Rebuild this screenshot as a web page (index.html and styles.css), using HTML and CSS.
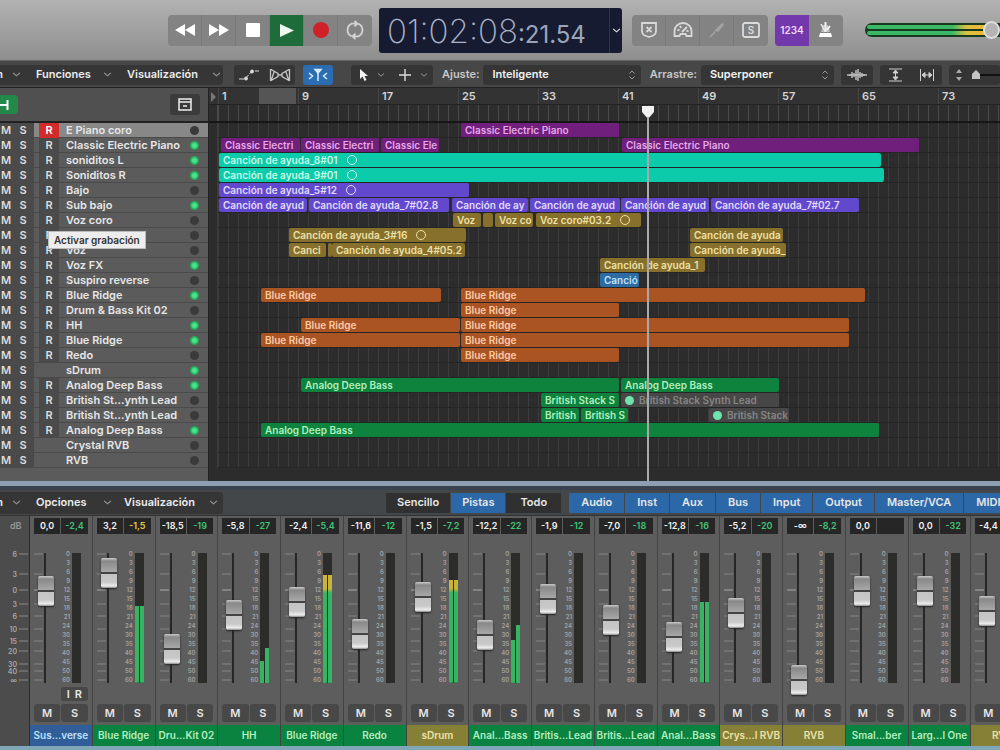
FILE: index.html
```html
<!DOCTYPE html>
<html lang="es">
<head>
<meta charset="utf-8">
<title>Proyecto - Pistas</title>
<link rel="stylesheet" href="styles.css">
</head>
<body>
<svg class="defs" width="0" height="0" aria-hidden="true">
  <symbol id="chev" viewBox="0 0 8 6"><path d="M1 1.5 4 4.2 7 1.5" fill="none" stroke="currentColor"/></symbol>
  <symbol id="updown" viewBox="0 0 8 12"><path d="M1.5 4.5 4 2 6.5 4.500M1.500 7.500 4 10 6.500 7.500" fill="none" stroke="currentColor"/></symbol>
</svg>

<header class="transport">
  <div class="group">
    <button class="tbtn" aria-label="Rebobinar"><svg width="22" height="14"><path d="M11 1v12L1 7zM21 1v12L11 7z" fill="#fff"/></svg></button>
    <button class="tbtn" aria-label="Avance"><svg width="22" height="14"><path d="M1 1v12l10-6zM11 1v12l10-6z" fill="#fff"/></svg></button>
    <button class="tbtn" aria-label="Detener"><svg width="16" height="16"><rect x="1" y="1" width="14" height="14" rx="1" fill="#fff"/></svg></button>
    <button class="tbtn play" aria-label="Reproducir"><svg width="16" height="16"><path d="M1 2v13l14-6.500z" fill="#eef8ee"/></svg></button>
    <button class="tbtn" aria-label="Grabar"><svg width="18" height="18"><circle cx="9" cy="9" r="8" fill="#d0202a"/></svg></button>
    <button class="tbtn" aria-label="Ciclo"><svg width="20" height="20" fill="none" stroke="#d4d4d4" stroke-width="1.800"><path d="M6.500 16.300A7 7 0 0 1 6.500 3.700H12M13.500 3.700A7 7 0 0 1 13.500 16.300H8M9.500 1l3 2.700-3 2.700M10.500 13.600l-3 2.700 3 2.700"/></svg></button>
  </div>
  <div class="lcd">
    <div class="time"><span class="big">01:02:08</span><span class="small">:21.54</span></div>
    <button class="lcdmenu" aria-label="Modo de pantalla"><svg width="9" height="7"><use href="#chev"/></svg></button>
  </div>
  <div class="group modes">
    <button class="tbtn" aria-label="Reemplazar"><svg width="18" height="18" fill="none" stroke="#d8d8d8" stroke-width="1.800"><path d="M2 2h14v8c0 4-3 5-7 6-4-1-7-2-7-6zM6.500 6l5 5M11.500 6l-5 5"/></svg></button>
    <button class="tbtn" aria-label="Latencia"><svg width="20" height="16" fill="none" stroke="#d8d8d8" stroke-width="1.800"><path d="M1.500 14V9a8.500 8 0 0 1 17 0v5h-5l-1-2h-5l-1 2zM9 10l5-5M4.500 8h2M7 4l1 2M15.500 9h-2"/></svg></button>
    <button class="tbtn" aria-label="Afinador"><svg width="18" height="18"><path d="M2 16l5-6 3 1 6-7-1-2-2 1-6 6z" fill="#a2a2a2"/><path d="M2 16l5-5" stroke="#a2a2a2" stroke-width="1.500"/></svg></button>
    <button class="tbtn" aria-label="Solo"><svg width="18" height="16"><rect x="1" y="1" width="16" height="14" rx="2" fill="none" stroke="#dcdcdc" stroke-width="1.800"/><text x="9" y="12" class="solo" text-anchor="middle">S</text></svg></button>
  </div>
  <div class="group count">
    <button class="tbtn countin">1234</button>
    <button class="tbtn" aria-label="Metrónomo"><svg width="16" height="18"><path d="M5 4h5l2 7H3z" fill="#bcbcbc"/><path d="M2 12h11l1 4H1z" fill="#fff"/><path d="M7.500 11 3 3" stroke="#e8e8e8" stroke-width="1.500"/><path d="M6.500 1h2v10h-2z" fill="#f0f0f0"/><path d="M9 9l3-4" stroke="#fff" stroke-width="1.500"/></svg></button>
  </div>
  <div class="volume" aria-label="Volumen maestro"><i></i><i></i><b></b></div>
</header>

<main class="arrange">
  <div class="toolbar">
    <div class="menus">
      <button class="menu cut"><span>n</span><svg width="9" height="7"><use href="#chev"/></svg></button>
      <button class="menu m1">Funciones<svg width="9" height="7"><use href="#chev"/></svg></button>
      <button class="menu m2">Visualización<svg width="9" height="7"><use href="#chev"/></svg></button>
    </div>
    <div class="tools auto">
      <button aria-label="Automatización"><svg width="22" height="14" fill="#ddd" stroke="#ddd"><path d="M1 11h6L14 3h7" fill="none" stroke-dasharray="5 1.500"/><circle cx="8" cy="10.500" r="1.500"/><circle cx="14" cy="3.500" r="1.500"/></svg></button>
      <button aria-label="Flex"><svg width="22" height="14" fill="none" stroke="#c4c4c4" stroke-width="1.300"><path d="M1.500 1v12M20.500 1v12M2 1.500l7 4v3l-7 4M20 1.500l-7 4v3l7 4M5 4l-3 9M17 4l3 9M9 7h4"/></svg></button>
    </div>
    <button class="catch" aria-label="Seguir reproducción"><svg width="22" height="14" fill="none" stroke="#d8ecff" stroke-width="1.500"><path d="M2 5l3.500 3L2 11M20 5l-3.500 3 3.500 3M11 4v9"/><path d="M8 1.500h6L11 5z" fill="#d8ecff"/></svg></button>
    <div class="tools pointer">
      <button aria-label="Puntero"><svg width="10" height="14"><path d="M1 1v10l2.500-2.500L5.500 13l2-1-2-4H9z" fill="#f4f4f4"/></svg><svg width="8" height="6"><use href="#chev"/></svg></button>
      <button aria-label="Marquesina"><svg width="14" height="14"><path d="M7 1v12M1 7h12" stroke="#ddd" stroke-width="1.400"/></svg><svg width="8" height="6"><use href="#chev"/></svg></button>
    </div>
    <label for="snap">Ajuste:</label>
    <div class="pick snap"><select id="snap"><option>Inteligente</option></select><svg width="8" height="12"><use href="#updown"/></svg></div>
    <label for="drag">Arrastre:</label>
    <div class="pick drag"><select id="drag"><option>Superponer</option></select><svg width="8" height="12"><use href="#updown"/></svg></div>
    <div class="tools wave"><button aria-label="Zoom de onda"><svg width="20" height="14" stroke="#bbb" stroke-width="1.500"><path d="M0 7h20M3 6v2M5 4v6M7 5v4M9 2v10M11 1v12M13 4v6M15 5v4M17 6v2"/></svg></button></div>
    <div class="tools fit">
      <button aria-label="Ajustar vertical"><svg width="16" height="16" stroke="#d0d0d0" fill="#d0d0d0"><path d="M1 2h13M1 14h13M7.500 4v8"/><path d="M5 6l2.500-3L10 6zM5 10l2.500 3 2.500-3z"/></svg></button>
      <button aria-label="Ajustar horizontal"><svg width="16" height="16" stroke="#d0d0d0" fill="#d0d0d0"><path d="M1.500 2v12M14.500 2v12M4 8h8"/><path d="M6 5.500L3 8l3 2.500zM10 5.500L13 8l-3 2.500z"/></svg></button>
    </div>
    <div class="tools zoom"><svg width="60" height="16"><path d="M2 6l3-4 3 4zM2 10l3 4 3-4z" fill="#aaa"/><path d="M20 8h40" stroke="#111" stroke-width="2"/><path d="M18 12V7l4-4 4 4v5z" fill="#c4c4c4"/></svg></div>
  </div>

  <div class="workspace">
    <section class="tracks">
      <div class="trackhead">
        <button class="add" aria-label="Vista de pistas"><svg width="18" height="18"><path d="M0 9h7M7.500 4v10" stroke="#fff" stroke-width="2"/></svg></button>
        <button class="config" aria-label="Configurar"><svg width="14" height="13" fill="none" stroke="#eee" stroke-width="1.500"><path d="M1 1h12v11H1zM1 4h12M5 8h4"/></svg></button>
      </div>
      <div class="tracklist" id="tracklist"></div>
      <div class="tooltip" role="tooltip">Activar grabación</div>
    </section>
    <section class="timeline">
      <div class="ruler"><div class="numbers" id="numbers"></div><div class="ticks"></div><svg class="start" width="6" height="10"><path d="M0 0l5 5-5 5z" fill="#777"/></svg></div>
      <div class="lanes" id="lanes"></div>
      <div class="playhead"><svg width="14" height="15"><path d="M1 1h12v6l-6 7-6-7z" fill="#f0f0f0"/></svg></div>
    </section>
  </div>
</main>

<section class="mixer">
  <div class="mixbar">
    <div class="menus">
      <button class="menu cut"><span>n</span><svg width="9" height="7"><use href="#chev"/></svg></button>
      <button class="menu m1">Opciones<svg width="9" height="7"><use href="#chev"/></svg></button>
      <button class="menu m3">Visualización<svg width="9" height="7"><use href="#chev"/></svg></button>
    </div>
    <div class="seg views"><button>Sencillo</button><button class="on">Pistas</button><button>Todo</button></div>
    <div class="seg filters"><button>Audio</button><button>Inst</button><button>Aux</button><button>Bus</button><button>Input</button><button>Output</button><button>Master/VCA</button><button>MIDI</button></div>
  </div>
  <div class="console">
    <div class="scale"><span>dB</span><svg id="dbscale" width="30" height="150"></svg></div>
    <div class="strips" id="strips"></div>
  </div>
</section>
<script src="app.js"></script>
</body>
</html>
```
FILE: styles.css
```css
* { box-sizing: border-box; }
body {
  margin: 0; height: 100vh; overflow: hidden; display: flex; flex-direction: column;
  background: #2c2c2c; color: #e6e6e6;
  font: 600 11px/15px Inter, "Liberation Sans", sans-serif;
}
button, select { font: inherit; color: inherit; border: 0; padding: 0; margin: 0; background: none; }
button { display: flex; align-items: center; justify-content: center; white-space: nowrap; }
svg { flex: none; display: block; }
.defs { position: absolute; }

.transport {
  flex: none; height: 61px; display: flex; align-items: center; padding: 0 0 0 168px;
  background: linear-gradient(#b2b2b2, #a2a2a2 45%, #8e8e8e); border-bottom: 1px solid #666;
}
.group { display: flex; height: 31px; border-radius: 4px; overflow: hidden; background: #838383; }
.tbtn { width: 34px; border-right: 1px solid #797979; }
.tbtn:last-child { border-right: 0; }
.play { background: #1e6c39; }
.lcd { width: 243px; height: 45px; margin: 0 10px 0 7px; display: flex; background: #161b31; border-radius: 3px; }
.time { flex: 1; display: flex; align-items: baseline; padding-left: 8px; color: #a9b2c6; }
.big { font-size: 33px; line-height: 46px; font-weight: 200; }
.small { font-size: 24px; font-weight: 400; color: #9ba5ba; }
.lcdmenu { width: 13px; border-left: 1px solid #2c3248; }
.solo { font: 600 10px Inter, sans-serif; fill: #dcdcdc; }
.count { margin-left: 7px; }
.countin { background: #7338ab; color: #f0dcff; font-size: 10px; border: 0; }
.volume {
  position: relative; flex: 1; height: 14px; margin-left: 22px; padding: 2px; display: flex; flex-direction: column; gap: 2px;
  background: #17391f; border-radius: 7px 0 0 7px;
}
.volume i { flex: 1; border-radius: 3px 0 0 3px; background: linear-gradient(90deg, #3cb765 65%, #e0c040 76%, #f0b030); }
.volume b { position: absolute; right: 0; top: -2px; width: 17px; height: 18px; border-radius: 50%; background: #b4b4b4; border: 2px solid #dedede; }

.arrange { flex: 1; min-height: 0; display: flex; flex-direction: column; }
.toolbar { flex: none; height: 27px; display: flex; align-items: center; padding-top: 1px; background: #474747; border-bottom: 1px solid #222; overflow: hidden; }
.toolbar label { margin: 0 4px 0 9px; color: #c8c8c8; }
.menus { flex: none; width: 223px; height: 20px; display: flex; background: #363636; border-radius: 0 3px 3px 0; color: #ececec; }
.menu { justify-content: space-between; }
.menu svg, .tools svg, .pick svg { color: #999; }
.cut { width: 21px; }
.m1 { width: 76px; margin-left: 15px; }
.m2 { width: 94px; margin-left: 15px; }
.m3 { width: 94px; margin-left: 12px; }
.cut span { width: 3px; display: flex; justify-content: flex-end; }
.tools { flex: none; height: 20px; display: flex; background: #353535; border-radius: 3px; }
.tools button { flex: 1; gap: 8px; }
.auto { width: 61px; margin-left: 11px; }
.catch { flex: none; width: 30px; height: 20px; margin: 0 18px 0 8px; background: #2c6cb0; border-radius: 3px; }
.pointer { width: 82px; }
.pick { position: relative; height: 20px; background: #353535; border-radius: 3px; color: #f2f2f2; }
.pick select { width: 100%; height: 20px; padding-left: 9px; appearance: none; }
.pick svg { position: absolute; right: 5px; top: 4px; pointer-events: none; }
.snap { flex: 155; }
.drag { flex: 131; }
.wave { width: 32px; margin-left: 7px; }
.fit { width: 62px; margin: 0 7px; }
.zoom { width: 51px; align-items: center; padding-left: 5px; overflow: hidden; }

.workspace { flex: 1; min-height: 0; display: flex; }
.tracks { position: relative; flex: none; width: 209px; background: #5b5b5b; border-right: 1px solid #222; }
.trackhead { height: 35px; display: flex; align-items: center; justify-content: space-between; padding-right: 8px; background: #505050; border-bottom: 2px solid #222; }
.add { width: 18px; height: 19px; background: #22894a; border-radius: 0 4px 4px 0; }
.config { width: 30px; height: 21px; background: #3b3b3b; border-radius: 3px; }
.track { height: 15px; display: grid; grid-template-columns: 12px 22px 5px 20px 7px 1fr 27px; border-bottom: 1px solid #4a4a4a; line-height: 15px; }
.track button { background: #4a4a4a; height: 15px; color: #dcdcdc; overflow: hidden; }
.track .rec { grid-column: 4; }
.track .name { grid-column: 6; white-space: nowrap; }
.track .led { grid-column: 7; width: 9px; height: 9px; margin: 3px 0 0 9px; border-radius: 50%; background: #3a3a3a; }
.track .led.on { background: radial-gradient(#4ee08a 30%, #22a858 60%); }
.track.selected { background: linear-gradient(90deg, #5b5b5b 34px, #888 34px); }
.track.selected .rec { background: #d32a2c; color: #fff; }
.tooltip { position: absolute; left: 48px; top: 143px; padding: 0 5px; height: 18px; line-height: 17px; font-size: 10px; color: #333; background: #ededed; border: 1px solid #bbb; }

.timeline { position: relative; flex: 1; min-width: 0; overflow: hidden; background: #2c2c2c; }
.ruler { position: relative; height: 35px; border-bottom: 2px solid #161616; background: #2d2d2d; }
.start { position: absolute; left: 2px; top: 4px; }
.numbers { display: flex; height: 17px; padding-left: 9px; background: linear-gradient(90deg, #333 50px, #555 50px, #555 87px, #333 87px); border-bottom: 1px solid #222; }
.numbers span { flex: none; width: 80px; padding-left: 3px; border-left: 1px solid #454545; line-height: 17px; color: #d4d4d4; }
.ticks { height: 16px; background: repeating-linear-gradient(90deg, #4a4a4a 0, #4a4a4a 1px, transparent 1px, transparent 10px) 9px 0; }
.lanes { background: repeating-linear-gradient(90deg, #3c3c3c 0, #3c3c3c 1px, transparent 1px, transparent 10px) 9px 0; }
.lane { position: relative; height: 15px; margin-left: 9px; border-bottom: 1px solid #252525; }
.region {
  position: absolute; top: 0; height: 14px; padding-left: 4px; overflow: hidden; white-space: nowrap;
  border-radius: 2px; font-size: 10px; line-height: 15px;
}
.region.looped::after { content: ""; display: inline-block; width: 8px; height: 8px; margin-left: 9px; border: 1px solid currentColor; border-radius: 50%; vertical-align: -1px; }
.purple { background: #701f7d; color: #e3a8e8; }
.teal { background: #0bcbaa; color: #c8fbe8; }
.indigo { background: #6148cd; color: #e2dcff; }
.olive { background: #87702c; color: #eee0a8; }
.orange { background: #aa5423; color: #fccba8; }
.green { background: #0d833d; color: #b2efbe; }
.blue { background: #2d6ba2; color: #bfe2fa; }
.muted { background: #474747; color: #858585; }
.muted::before { content: ""; display: inline-block; width: 9px; height: 9px; margin-right: 5px; border-radius: 50%; background: #6fe3ab; vertical-align: -1px; }
.playhead { position: absolute; left: 432px; top: 17px; bottom: 0; width: 14px; }
.playhead::after { content: ""; position: absolute; left: 6px; top: 12px; bottom: 0; width: 2px; background: #a9a9a9; }

.mixer { flex: none; border-top: 5px solid #8f9fb3; border-bottom: 4px solid #7fa7b8; background: #444749; }
.mixbar { height: 29px; display: flex; align-items: center; overflow: hidden; border-top: 4px solid #39424d; }
.mixbar .menus { height: 22px; }
.seg { display: flex; height: 20px; gap: 1px; }
.seg button { padding: 0 12px; background: #303030; color: #e6e6e6; }
.views { margin-left: 163px; }
.views button.on, .filters button { background: #2c68a8; }
.views button { padding: 0 11px; }
.filters { margin-left: 8px; }
.views, .filters { font-size: 11px; }
.views button:last-child { padding: 0 14px; }
.filters button { padding: 0 12px; }
.console { display: flex; border-top: 1px solid #333; }
.scale { flex: none; width: 30px; padding-top: 2px; background: #4c4c4c; color: #999; font-size: 9px; border-right: 1px solid #2c2c2c; }
.scale span { display: block; height: 16px; padding-left: 10px; }
.scale svg { margin-top: 5px; }
.scale text { font: 600 7px Inter, sans-serif; fill: #a8a8a8; }
.strips { flex: 1; min-width: 0; display: flex; overflow: hidden; background: #5d5d5d; }
.strip { flex: 0 0 6.47%; border-right: 1px solid #434343; }
.pair { display: grid; grid-template-columns: 1fr 1fr; gap: 1px; padding: 0 4px; }
.readouts { padding-top: 2px; }
.readouts output { height: 16px; line-height: 16px; text-align: center; background: #262626; color: #f2f2f2; font-size: 9px; overflow: hidden; }
.readouts .peak { color: #3fc47a; }
.readouts .peak.hot { color: #e2cf3a; }
.faders { display: grid; grid-template-columns: 24px 10px 9px; column-gap: 2px; height: 154px; padding: 5px 0 0 4px; }
.fader { position: relative; height: 156px; background: linear-gradient(#272727, #272727) 10px 14px / 2px 130px no-repeat; }
.fader svg { position: absolute; left: 0; top: 0; }
.fader input { position: relative; display: block; width: 16px; height: 156px; margin: 0 0 0 4px; appearance: none; background: none; writing-mode: vertical-lr; direction: rtl; }
.fader input::-webkit-slider-thumb { appearance: none; width: 16px; height: 30px; border-radius: 2px; background: linear-gradient(#ccc 0, #888 3px, #a8a8a8 14px, #444 14px, #444 16px, #c4c4c4 16px, #c8c8c8 24px, #eee 28px, #888); box-shadow: 0 1px 2px #222; }
.digits { display: flex; flex-direction: column; justify-content: space-between; height: 135px; margin-top: 10px; font-size: 6px; line-height: 9px; text-align: right; color: #a2a2a2; }
.meter { height: 130px; margin-top: 14px; display: flex; align-items: flex-end; gap: 1px; background: #2c2c2a; }
.meter i { flex: 1; background: linear-gradient(0deg, #36b463 90px, #c6b43a 94px, #d8b43a 130px) bottom / 100% 130px no-repeat; }
.mode { height: 14px; width: 27px; margin: -1px 4px 0 auto; }
.mode button { width: 27px; height: 14px; gap: 5px; background: #484848; border-radius: 3px; }
.mute { padding-top: 3px; }
.mute button { height: 18px; background: #484848; border-radius: 3px; }
.label { height: 21px; margin-top: 3px; line-height: 21px; text-align: center; white-space: nowrap; font-size: 10px; overflow: hidden; }
.label.green { background: #0a8240; }
.label.olive { background: #858035; }
.label.blue { background: #315e98; }
```
FILE: app.js
```javascript
const CEP = 'Classic Electric Piano', CA = 'Canción de ayuda', BR = 'Blue Ridge', ADB = 'Analog Deep Bass';
// name, record button, active light, regions [start, length, colour, title, looped]
const tracks = [
  ['E Piano coro', 1, 0, [[243, 158, 'purple', CEP]]],
  [CEP, 1, 1, [[3, 79, 'purple', 'Classic Electri'], [83, 78, 'purple', 'Classic Electri'], [163, 58, 'purple', 'Classic Ele'], [404, 297, 'purple', CEP]]],
  ['soniditos L', 1, 1, [[1, 662, 'teal', CA + '_8#01', 1]]],
  ['Soniditos R', 1, 1, [[1, 665, 'teal', CA + '_9#01', 1]]],
  ['Bajo', 1, 0, [[1, 250, 'indigo', CA + '_5#12', 1]]],
  ['Sub bajo', 1, 1, [[1, 88, 'indigo', 'Canción de ayud'], [91, 140, 'indigo', CA + '_7#02.8'], [234, 76, 'indigo', 'Canción de ay'], [312, 90, 'indigo', 'Canción de ayud'], [403, 88, 'indigo', 'Canción de ayud'], [493, 148, 'indigo', CA + '_7#02.7']]],
  ['Voz coro', 1, 0, [[235, 28, 'olive', 'Voz'], [265, 10, 'olive', ''], [277, 38, 'olive', 'Voz co'], [318, 105, 'olive', 'Voz coro#03.2', 1]]],
  ['', 1, 0, [[71, 177, 'olive', CA + '_3#16', 1], [472, 93, 'olive', CA]]],
  ['Voz', 1, 0, [[71, 37, 'olive', 'Canci'], [110, 3, 'olive', ''], [114, 133, 'olive', CA + '_4#05.2'], [472, 96, 'olive', CA + '_']]],
  ['Voz FX', 1, 1, [[382, 105, 'olive', CA + '_1']]],
  ['Suspiro reverse', 1, 0, [[382, 39, 'blue', 'Canció']]],
  [BR, 1, 1, [[43, 180, 'orange', BR], [243, 404, 'orange', BR]]],
  ['Drum & Bass Kit 02', 1, 0, [[243, 158, 'orange', BR]]],
  ['HH', 1, 1, [[83, 159, 'orange', BR], [243, 388, 'orange', BR]]],
  [BR, 1, 1, [[43, 199, 'orange', BR], [243, 388, 'orange', BR]]],
  ['Redo', 1, 0, [[243, 158, 'orange', BR]]],
  ['sDrum', 0, 1, []],
  [ADB, 1, 1, [[83, 318, 'green', ADB], [403, 158, 'green', ADB]]],
  ['British St...ynth Lead', 1, 0, [[323, 78, 'green', 'British Stack S'], [403, 158, 'muted', 'British Stack Synth Lead']]],
  ['British St...ynth Lead', 1, 0, [[323, 38, 'green', 'British'], [363, 47, 'green', 'British S'], [491, 80, 'muted', 'British Stack']]],
  [ADB, 1, 1, [[43, 618, 'green', ADB]]],
  ['Crystal RVB', 0, 0, []],
  ['RVB', 0, 0, []]
];
const esc = s => s.replace('&', '&amp;');
const byId = id => document.getElementById(id);

byId('tracklist').innerHTML = tracks.map(([name, rec, on], i) =>
  `<div class="track${i ? '' : ' selected'}"><button>M</button><button>S</button>${rec ? '<button class="rec">R</button>' : ''}` +
  `<span class="name">${esc(name)}</span><span class="led${on ? ' on' : ''}"></span></div>`).join('');

byId('lanes').innerHTML = tracks.map(t => '<div class="lane">' + t[3].map(([x, w, c, s, loop]) =>
  `<div class="region ${c}${loop ? ' looped' : ''}" style="left:${x}px;width:${w}px"${s ? '' : ' aria-hidden="true"'}>${s}</div>`).join('') + '</div>').join('');

byId('numbers').innerHTML = [1, 9, 17, 25, 33, 41, 49, 57, 65, 73].map(n => `<span>${n}</span>`).join('');

const marks = [[6, 15], [3, 35], [0, 51], [3, 65], [6, 77], [10, 90], [15, 102], [20, 112], [30, 125], [40, 132], ['∞', 141]];
byId('dbscale').innerHTML = marks.map(([n, y]) =>
  `<text x="17" y="${y + 3}" text-anchor="end">${n}</text><path d="M19 ${y}h9" stroke="#888"/>`).join('');
const notches = '<svg width="12" height="156">' + marks.map(([n, y]) =>
  `<path d="M0 ${y}h9" stroke="${n === 0 ? '#aaa' : '#868686'}"/>`).join('') + '</svg>';
const digits = [0, 3, 6, 9, 12, 15, 18, 21, 24, 30, 35, 40, 45, 50, 60].map(n => `<span>${n}</span>`).join('');

// name, colour, gain, peak, fader position, left level, right level
const strips = [
  ['Sus...verse', 'blue', '0,0', '-2,4', 89, 0, 0], [BR, 'green', '3,2', '-1,5', 107, 59, 59],
  ['Dru...Kit 02', 'green', '-18,5', '-19', 31, 0, 0], ['HH', 'green', '-5,8', '-27', 65, 17, 27],
  [BR, 'green', '-2,4', '-5,4', 78, 83, 83], ['Redo', 'green', '-11,6', '-12', 46, 0, 0],
  ['sDrum', 'olive', '-1,5', '-7,2', 83, 79, 79], ['Anal...Bass', 'green', '-12,2', '-22', 45, 33, 45],
  ['Britis...Lead', 'green', '-1,9', '-12', 81, 0, 0], ['Britis...Lead', 'green', '-7,0', '-18', 60, 0, 0],
  ['Anal...Bass', 'green', '-12,8', '-16', 43, 62, 62], ['Crys...l RVB', 'olive', '-5,2', '-20', 67, 0, 0],
  ['RVB', 'olive', '-∞', '-8,2', 0, 0, 0], ['Smal...ber', 'green', '0,0', '', 89, 0, 0],
  ['Larg...l One', 'green', '0,0', '-32', 89, 0, 0], ['RVB', 'olive', '-4,4', '', 69, 0, 0]
];
byId('strips').innerHTML = strips.map(([name, c, gain, peak, pos, l, r], i) =>
  `<div class="strip"><div class="pair readouts"><output>${gain}</output><output class="peak${peak === '-1,5' ? ' hot' : ''}">${peak}</output></div>` +
  `<div class="faders"><div class="fader">${notches}<input type="range" min="0" max="126" value="${pos}" aria-label="Volumen ${name}"></div>` +
  `<div class="digits">${digits}</div><div class="meter"><i style="height:${l}%"></i><i style="height:${r}%"></i></div></div>` +
  `<div class="mode">${i ? '' : '<button><span>I</span><span>R</span></button>'}</div>` +
  `<div class="pair mute"><button>M</button><button>S</button></div><div class="label ${c}">${name}</div></div>`).join('');
```
